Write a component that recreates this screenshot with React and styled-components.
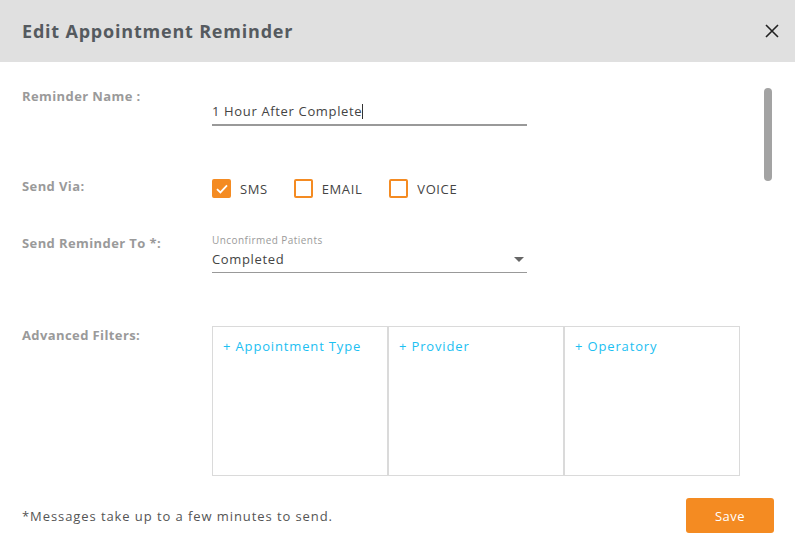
import React from "react";
import styled, { createGlobalStyle } from "styled-components";

const GlobalStyle = createGlobalStyle`
  body {
    margin: 0;
    background: #fff;
    font-family: "Open Sans", "Noto Sans", sans-serif;
    overflow: hidden;
  }
`;

const Modal = styled.div`
  width: 795px;
  height: 555px;
  display: flex;
  flex-direction: column;
  position: relative;
`;

const Header = styled.div`
  height: 62px;
  background: #e0e0e0;
  display: flex;
  align-items: center;
  justify-content: space-between;
  padding: 0 14px 0 22px;
  box-sizing: border-box;
`;

const Title = styled.h1`
  margin: 0;
  font-size: 18px;
  font-weight: 700;
  color: #555a5f;
  letter-spacing: 0.8px;
`;

const CloseButton = styled.button`
  border: none;
  background: none;
  padding: 0;
  width: 18px;
  height: 18px;
  display: flex;
  align-items: center;
  justify-content: center;
  cursor: pointer;
`;

const Body = styled.div`
  flex: 1;
  padding: 0 22px;
  position: relative;
`;

const Row = styled.div`
  display: grid;
  grid-template-columns: 190px 315px;
  align-items: start;
  margin-top: ${p => p.top}px;
`;

const Label = styled.div`
  font-size: 13px;
  font-weight: 700;
  color: #9a9a9a;
  line-height: 18px;
  letter-spacing: 0.4px;
  margin-top: ${p => p.offset || 0}px;
`;

const TextField = styled.div`
  border-bottom: 2px solid #999;
  height: 28px;
  box-sizing: border-box;
  display: flex;
  align-items: center;
  font-size: 13px;
  color: #444;
  letter-spacing: 0.65px;
  margin-top: ${p => p.offset || 0}px;
`;

const Caret = styled.span`
  display: inline-block;
  width: 1px;
  height: 15px;
  background: #333;
`;

const CheckGroup = styled.div`
  display: flex;
  align-items: center;
`;

const CheckItem = styled.label`
  display: flex;
  align-items: center;
  margin-right: ${p => p.gap}px;
  font-size: 13px;
  color: #444;
  letter-spacing: 0.6px;
`;

const Box = styled.span`
  width: 19px;
  height: 19px;
  box-sizing: border-box;
  border: 2px solid #f48b22;
  border-radius: 2px;
  background: ${p => (p.checked ? "#f48b22" : "#fff")};
  display: flex;
  align-items: center;
  justify-content: center;
  margin-right: 9px;
`;

const SelectWrap = styled.div`
  display: flex;
  flex-direction: column;
`;

const SmallLabel = styled.div`
  font-size: 10px;
  color: #9a9a9a;
  line-height: 12px;
  letter-spacing: 0.45px;
`;

const Select = styled.div`
  border-bottom: 1px solid #999;
  height: 27px;
  box-sizing: border-box;
  display: flex;
  align-items: center;
  justify-content: space-between;
  font-size: 13px;
  color: #444;
  letter-spacing: 0.65px;
  padding-right: 3px;
`;

const Arrow = styled.span`
  width: 0;
  height: 0;
  border-left: 5px solid transparent;
  border-right: 5px solid transparent;
  border-top: 5px solid #666;
`;

const Filters = styled.div`
  display: grid;
  grid-template-columns: repeat(3, 176px);
  height: 150px;
`;

const FilterCol = styled.div`
  border: 1px solid #dadada;
  padding: 7px 10px;
  box-sizing: border-box;
`;

const FilterLink = styled.a`
  font-size: 13px;
  color: #1cc0f2;
  text-decoration: none;
  cursor: pointer;
  letter-spacing: 0.85px;
`;

const Scrollbar = styled.div`
  position: absolute;
  right: 23px;
  top: 26px;
  width: 8px;
  height: 93px;
  border-radius: 4px;
  background: #a3a3a3;
`;

const Footer = styled.div`
  display: flex;
  align-items: center;
  justify-content: space-between;
  padding: 0 21px 22px 22px;
`;

const Note = styled.div`
  font-size: 13px;
  color: #555;
  letter-spacing: 0.92px;
`;

const SaveButton = styled.button`
  width: 88px;
  height: 35px;
  border: none;
  border-radius: 3px;
  background: #f48b22;
  color: #fff;
  font-family: "Open Sans", "Noto Sans", sans-serif;
  font-size: 13px;
  letter-spacing: 0.5px;
  cursor: pointer;
`;

const Check = () => (
  <svg width="14" height="14" viewBox="0 0 14 14">
    <path d="M2 7.2 L5.4 10.4 L12 3.4" fill="none" stroke="#fff" strokeWidth="1.8" />
  </svg>
);

export default function App() {
  const channels = [
    { name: "SMS", checked: true, gap: 26 },
    { name: "EMAIL", checked: false, gap: 27 },
    { name: "VOICE", checked: false, gap: 0 },
  ];

  return (
    <Modal>
      <GlobalStyle />
      <Header>
        <Title>Edit Appointment Reminder</Title>
        <CloseButton title="close">
          <svg width="14" height="14" viewBox="0 0 14 14">
            <path d="M1 1 L13 13 M13 1 L1 13" stroke="#222" strokeWidth="1.6" />
          </svg>
        </CloseButton>
      </Header>
      <Body>
        <Scrollbar />
        <Row top={25}>
          <Label>Reminder Name :</Label>
          <TextField offset={11}>
            1 Hour After Complete<Caret />
          </TextField>
        </Row>
        <Row top={53}>
          <Label offset={-2}>Send Via:</Label>
          <CheckGroup>
            {channels.map(c => (
              <CheckItem key={c.name} gap={c.gap}>
                <Box checked={c.checked}>{c.checked && <Check />}</Box>
                {c.name}
              </CheckItem>
            ))}
          </CheckGroup>
        </Row>
        <Row top={36}>
          <Label offset={0}>Send Reminder To *:</Label>
          <SelectWrap>
            <SmallLabel>Unconfirmed Patients</SmallLabel>
            <Select>
              Completed
              <Arrow />
            </Select>
          </SelectWrap>
        </Row>
        <Row top={53}>
          <Label offset={0}>Advanced Filters:</Label>
          <Filters>
            <FilterCol><FilterLink>+ Appointment Type</FilterLink></FilterCol>
            <FilterCol><FilterLink>+ Provider</FilterLink></FilterCol>
            <FilterCol><FilterLink>+ Operatory</FilterLink></FilterCol>
          </Filters>
        </Row>
      </Body>
      <Footer>
        <Note>*Messages take up to a few minutes to send.</Note>
        <SaveButton>Save</SaveButton>
      </Footer>
    </Modal>
  );
}
